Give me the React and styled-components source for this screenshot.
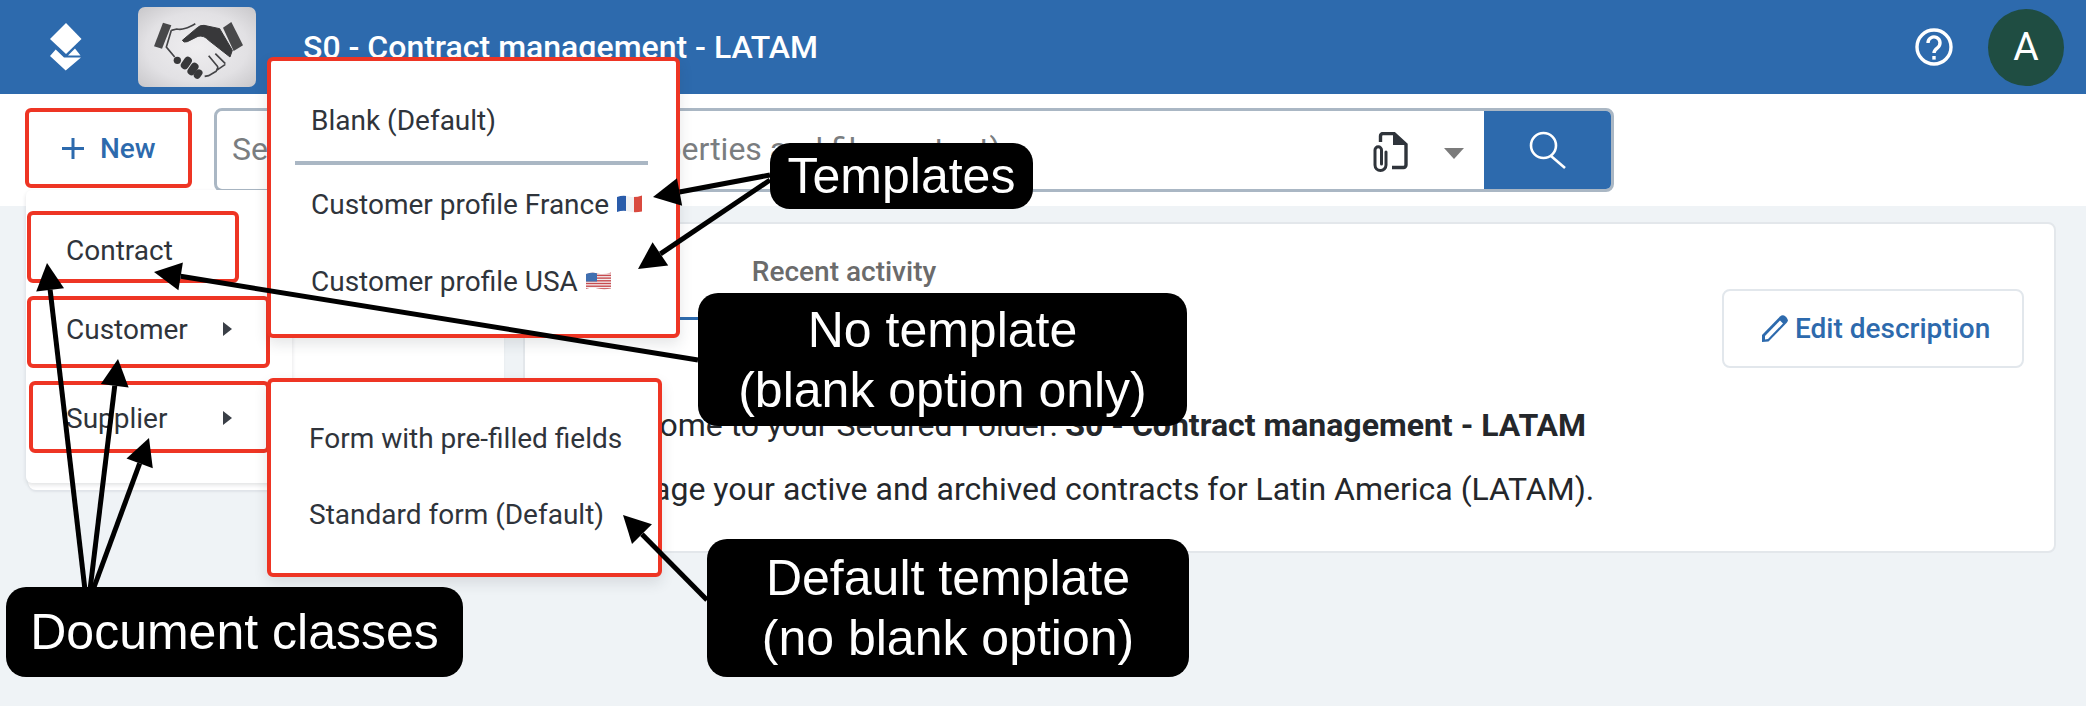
import styled, { createGlobalStyle } from "styled-components";

const GlobalStyle = createGlobalStyle`
  html, body { margin: 0; padding: 0; background: #eff3f6; }
  body { font-family: Roboto, "Liberation Sans", sans-serif; color: #2f343b; overflow: hidden; }
  * { box-sizing: border-box; }
`;

const BLUE = "#2d6aad";
const RED = "#ee3524";

const Page = styled.div`
  position: relative;
  width: 2086px;
  height: 706px;
  overflow: hidden;
`;

const Header = styled.header`
  display: flex;
  align-items: center;
  height: 94px;
  padding: 0 22px 0 50px;
  background: ${BLUE};
  color: #fff;
`;

const LogoBox = styled.div`
  width: 118px;
  height: 80px;
  margin-left: 56px;
  border-radius: 7px;
  overflow: hidden;
  svg { display: block; }
`;

const FolderTitle = styled.h1`
  flex: 1;
  margin: 0 0 0 47px;
  font-size: 32px;
  font-weight: 500;
  line-height: 94px;
`;

const Avatar = styled.div`
  display: flex;
  align-items: center;
  justify-content: center;
  width: 76px;
  height: 77px;
  margin-left: 35px;
  border-radius: 50%;
  background: #1f4d42;
  font-size: 39px;
`;

const Toolbar = styled.div`
  display: flex;
  align-items: flex-start;
  gap: 22px;
  height: 112px;
  padding: 14px 0 0 25px;
  background: #fff;
`;

const NewButton = styled.button`
  display: flex;
  align-items: center;
  gap: 16px;
  width: 167px;
  height: 80px;
  padding: 0 0 0 33px;
  background: #fff;
  border: 4px solid ${RED};
  border-radius: 6px;
  color: ${BLUE};
  font: 500 28px Roboto, sans-serif;
`;

const SearchBox = styled.div`
  display: flex;
  align-items: center;
  width: 1400px;
  height: 84px;
  border: 3px solid #aab7c4;
  border-radius: 8px;
  overflow: hidden;
`;

const Placeholder = styled.div`
  flex: 1;
  padding: 0 0 3px 15px;
  color: #7a7d80;
  font-size: 32px;
  white-space: nowrap;
`;

const ClipIcon = styled.svg`
  flex: none;
  margin-right: 36px;
  margin-top: 4px;
`;

const Caret = styled.span`
  flex: none;
  margin-right: 20px;
  margin-top: 6px;
  border-left: 10px solid transparent;
  border-right: 10px solid transparent;
  border-top: 11px solid #7b7b7b;
`;

const SearchButton = styled.div`
  display: flex;
  align-items: center;
  justify-content: center;
  flex: none;
  width: 127px;
  height: 100%;
  background: ${BLUE};
`;

const Content = styled.main`
  display: flex;
  align-items: flex-start;
  gap: 19px;
  padding: 16px 30px 0 28px;
`;

const SideCard = styled.aside`
  width: 476px;
  height: 268px;
  background: #fff;
  border-radius: 8px;
  box-shadow: 0 2px 2px #dfe3e8;
`;

const MainCard = styled.section`
  flex: 1;
  height: 331px;
  background: #fff;
  border: 2px solid #e3e7eb;
  border-radius: 8px;
`;

const CardHead = styled.div`
  display: flex;
  justify-content: space-between;
  align-items: flex-start;
  height: 145px;
  padding-right: 30px;
`;

const Tabs = styled.div`
  display: flex;
  height: 96px;
`;

const Tab = styled.div`
  display: flex;
  align-items: center;
  justify-content: center;
  width: ${(p) => p.$width}px;
  padding-top: 2px;
  border-bottom: 3px solid ${(p) => (p.$active ? BLUE : "transparent")};
  color: #6b6b6b;
  font-size: 28px;
  font-weight: 500;
`;

const EditButton = styled.button`
  display: flex;
  align-items: center;
  gap: 6px;
  width: 302px;
  height: 79px;
  margin-top: 65px;
  padding: 0 0 0 37px;
  background: #fff;
  border: 2px solid #e2e7ec;
  border-radius: 8px;
  color: ${BLUE};
  font: 500 28px Roboto, sans-serif;
`;

const CardBody = styled.div`
  padding: 39px 0 0 65px;
  color: #24272b;
  font-size: 32px;
  white-space: nowrap;
  p { margin: 0 0 30px; line-height: 34px; }
  b { font-weight: 700; }
`;

const Popup = styled.div`
  position: absolute;
  left: ${(p) => p.$left}px;
  top: ${(p) => p.$top}px;
  width: ${(p) => p.$width}px;
  height: ${(p) => p.$height}px;
  background: #fff;
  border-radius: 6px;
`;

const NewMenu = styled(Popup)`
  display: flex;
  flex-direction: column;
  gap: 13px;
  padding: 21px 0 0 1px;
  box-shadow: 0 2px 4px rgba(40, 50, 60, 0.14);
`;

const ClassItem = styled.div`
  display: flex;
  align-items: center;
  justify-content: space-between;
  width: ${(p) => p.$width}px;
  height: 72px;
  margin-left: ${(p) => p.$indent || 0}px;
  padding: ${(p) => p.$nudge || 0}px 34px 0 ${(p) => 35 - (p.$indent || 0)}px;
  padding-bottom: ${(p) => p.$lift || 0}px;
  border: 4px solid ${RED};
  border-radius: 6px;
  font-size: 28px;
`;

const SubCaret = styled.span`
  border-top: 7px solid transparent;
  border-bottom: 7px solid transparent;
  border-left: 9px solid #3a3f47;
`;

const TemplateMenu = styled(Popup)`
  display: flex;
  flex-direction: column;
  border: 4px solid ${RED};
  box-shadow: 0 6px 14px rgba(40, 50, 60, 0.12);
  font-size: 28px;
`;

const TemplateItem = styled.div`
  display: flex;
  align-items: center;
  gap: 8px;
  height: ${(p) => p.$height || 76}px;
  margin-top: ${(p) => p.$gap || 0}px;
  padding-left: ${(p) => p.$inset}px;
  padding-top: ${(p) => p.$nudge || 0}px;
  white-space: nowrap;
`;

const Divider = styled.hr`
  width: 353px;
  height: 4px;
  margin: 0 0 0 24px;
  background: #aab7c4;
  border: 0;
`;

const Callout = styled.div`
  position: absolute;
  left: ${(p) => p.$left}px;
  top: ${(p) => p.$top}px;
  width: ${(p) => p.$width}px;
  height: ${(p) => p.$height}px;
  display: flex;
  align-items: center;
  justify-content: center;
  background: #000;
  border-radius: 20px;
  color: #fff;
  font: 50px/60px "Liberation Sans", Arial, sans-serif;
  text-align: center;
`;

const ArrowLayer = styled.svg`
  position: absolute;
  left: 0;
  top: 0;
`;

const arrows = [
  { from: [770, 175], to: [653, 197] },
  { from: [770, 180], to: [638, 269] },
  { from: [698, 360], to: [154, 272] },
  { from: [85, 590], to: [47, 263] },
  { from: [90, 590], to: [118, 359] },
  { from: [93, 590], to: [149, 438] },
  { from: [707, 600], to: [623, 515] },
];

const Arrow = ({ from, to }) => {
  const dx = to[0] - from[0];
  const dy = to[1] - from[1];
  const len = Math.hypot(dx, dy);
  const ux = dx / len;
  const uy = dy / len;
  const bx = to[0] - ux * 27;
  const by = to[1] - uy * 27;
  const head = [
    to,
    [bx - uy * 14, by + ux * 14],
    [bx + uy * 14, by - ux * 14],
  ];
  return (
    <g>
      <line x1={from[0]} y1={from[1]} x2={bx} y2={by} stroke="#000" strokeWidth="5" />
      <polygon points={head.map((p) => p.join(",")).join(" ")} fill="#000" />
    </g>
  );
};

const AppLogo = () => (
  <svg width="32" height="48" viewBox="0 0 32 48" fill="#fff">
    <polygon points="16,0 31.5,16 16,31 0,16" />
    <polygon points="0,33 5.7,26.5 14,34.5 31,34.5 15.7,47.5" />
    <polygon points="25,25.5 30.5,32.5 18,32.5" />
  </svg>
);

const Handshake = () => (
  <svg width="118" height="80" viewBox="0 0 354 240">
    <defs>
      <radialGradient id="shakeBg" cx="50%" cy="50%" r="72%">
        <stop offset="0%" stopColor="#efeef0" />
        <stop offset="60%" stopColor="#e2e1e4" />
        <stop offset="100%" stopColor="#c6c5c8" />
      </radialGradient>
    </defs>
    <rect width="354" height="240" fill="url(#shakeBg)" />
    <polygon points="75,47 100,55 72,125 48,118" fill="#48484a" />
    <polygon points="280,45 315,115 287,132 255,62" fill="#48484a" />
    <path
      d="M133,100 L178,62 Q186,54 198,55 L245,65 L283,130 L276,150 L212,100 Q198,84 180,88 L148,104 Q136,108 133,100Z"
      fill="#38383a"
      stroke="#38383a"
      strokeWidth="3"
      strokeLinejoin="round"
    />
    <path d="M100,70 L116,66 C135,70 150,62 172,50 M100,70 L85,120 L110,150" fill="none" stroke="#444447" strokeWidth="5" />
    <path d="M212,146 L240,180 M232,140 L262,170 M262,172 L236,190 L240,180 M236,192 L212,206 L200,208" fill="none" stroke="#444447" strokeWidth="5" />
    <circle cx="118" cy="160" r="11" fill="#38383a" />
    <rect x="133" y="148" width="24" height="40" rx="12" transform="rotate(35 145 168)" fill="#38383a" />
    <rect x="153" y="166" width="24" height="40" rx="12" transform="rotate(35 165 186)" fill="#38383a" />
    <rect x="170" y="186" width="21" height="30" rx="10.5" transform="rotate(35 180 201)" fill="#38383a" />
  </svg>
);

const PlusIcon = () => (
  <svg width="22" height="21" viewBox="0 0 22 21" stroke={BLUE} strokeWidth="3">
    <path d="M11 0v21M0 10.5h22" />
  </svg>
);

const DocClip = () => (
  <ClipIcon width="35" height="41" viewBox="0 0 35 41" fill="none">
    <path d="M7.5 10V4a2.5 2.5 0 0 1 2.5-2.5H21L33 12.5V33a2.5 2.5 0 0 1-2.5 2.5H19" stroke="#2f343b" strokeWidth="3.4" />
    <path d="M20 1L34 13H20Z" fill="#2f343b" />
    <path d="M8.5 32V18a3.2 3.2 0 0 0-6.5 0V33a5.5 5.5 0 0 0 11 0V20" stroke="#2f343b" strokeWidth="3" strokeLinecap="round" />
  </ClipIcon>
);

const SearchIcon = () => (
  <svg width="38" height="38" viewBox="0 0 38 38" fill="none" stroke="#fff" strokeWidth="2.6">
    <circle cx="14.5" cy="14.5" r="12.5" />
    <path d="M22 25L36 37" />
  </svg>
);

const HelpIcon = () => (
  <svg width="38" height="38" viewBox="0 0 38 38" fill="none" stroke="#fff" strokeWidth="3.4">
    <circle cx="19" cy="19" r="17" />
    <path d="M13 15a6 6 0 1 1 9.5 4.8c-2.2 1.6-3.5 2.6-3.5 5.2" />
    <path d="M19 28v3.6" />
  </svg>
);

const PencilIcon = () => (
  <svg width="28" height="29" viewBox="0 0 28 29">
    <path d="M1 21L19 2.5a4 4 0 0 1 5.5 0l1 1a4 4 0 0 1 0 5.5L7.5 27.5 1 28Z" fill={BLUE} />
    <path d="M4 22L19 6.5l3 3L7 25l-3 .4Z" fill="#fff" />
  </svg>
);

const FLAG_WAVE = "M0 2Q6 0 12 1.5T25 .5V16.5Q18 18 12 16.5T0 17Z";

const FlagFrance = () => (
  <svg width="25" height="18" viewBox="0 0 25 18">
    <clipPath id="waveFr">
      <path d={FLAG_WAVE} />
    </clipPath>
    <g clipPath="url(#waveFr)">
      <rect width="9" height="18" fill="#2a5caa" />
      <rect x="9" width="8" height="18" fill="#f1f1f3" />
      <rect x="17" width="8" height="18" fill="#d94a3f" />
    </g>
  </svg>
);

const FlagUsa = () => (
  <svg width="25" height="18" viewBox="0 0 25 18">
    <clipPath id="waveUs">
      <path d={FLAG_WAVE} />
    </clipPath>
    <g clipPath="url(#waveUs)">
      <rect width="25" height="18" fill="#f3eff0" />
      {[0, 1, 2, 3, 4, 5, 6].map((n) => (
        <rect key={n} y={n * 2.7} width="25" height="1.4" fill="#c84b4f" />
      ))}
      <rect width="11" height="9.5" fill="#3f6fb0" />
    </g>
  </svg>
);

const App = () => (
  <Page>
    <GlobalStyle />
    <Header>
      <AppLogo />
      <LogoBox>
        <Handshake />
      </LogoBox>
      <FolderTitle>S0 - Contract management - LATAM</FolderTitle>
      <HelpIcon />
      <Avatar>A</Avatar>
    </Header>
    <Toolbar>
      <NewButton>
        <PlusIcon />
        New
      </NewButton>
      <SearchBox>
        <Placeholder>Search (name, description, properties and file content)</Placeholder>
        <DocClip />
        <Caret />
        <SearchButton>
          <SearchIcon />
        </SearchButton>
      </SearchBox>
    </Toolbar>
    <Content>
      <SideCard />
      <MainCard>
        <CardHead>
          <Tabs>
            <Tab $width={200} $active>Details</Tab>
            <Tab $width={238}>Recent activity</Tab>
          </Tabs>
          <EditButton>
            <PencilIcon />
            Edit description
          </EditButton>
        </CardHead>
        <CardBody>
          <p>
            Welcome to your Secured Folder: <b>S0 - Contract management - LATAM</b>
          </p>
          <p>Manage your active and archived contracts for Latin America (LATAM).</p>
        </CardBody>
      </MainCard>
    </Content>

    <NewMenu $left={26} $top={190} $width={266} $height={293}>
      <ClassItem $width={212} $nudge={6}>Contract</ClassItem>
      <ClassItem $width={243} $lift={6}>
        Customer
        <SubCaret />
      </ClassItem>
      <ClassItem $width={241} $indent={2} $nudge={2}>
        Supplier
        <SubCaret />
      </ClassItem>
    </NewMenu>

    <TemplateMenu $left={267} $top={57} $width={413} $height={281}>
      <TemplateItem $inset={40} $height={100} $nudge={18}>Blank (Default)</TemplateItem>
      <Divider />
      <TemplateItem $inset={40} $height={78}>
        Customer profile France <FlagFrance />
      </TemplateItem>
      <TemplateItem $inset={40}>
        Customer profile USA <FlagUsa />
      </TemplateItem>
    </TemplateMenu>

    <TemplateMenu $left={267} $top={378} $width={395} $height={199}>
      <TemplateItem $inset={38} $height={60} $gap={26}>Form with pre-filled fields</TemplateItem>
      <TemplateItem $inset={38} $height={92}>Standard form (Default)</TemplateItem>
    </TemplateMenu>

    <ArrowLayer width="2086" height="706">
      {arrows.map((a, i) => (
        <Arrow key={i} from={a.from} to={a.to} />
      ))}
    </ArrowLayer>

    <Callout $left={770} $top={143} $width={263} $height={66}>Templates</Callout>
    <Callout $left={698} $top={293} $width={489} $height={133}>
      No template
      <br />
      (blank option only)
    </Callout>
    <Callout $left={6} $top={587} $width={457} $height={90}>Document classes</Callout>
    <Callout $left={707} $top={539} $width={482} $height={138}>
      Default template
      <br />
      (no blank option)
    </Callout>
  </Page>
);

export default App;
